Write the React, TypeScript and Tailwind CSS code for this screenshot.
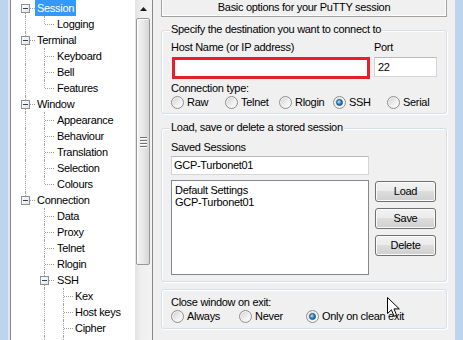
import React from "react";

const font =
  "font-['Liberation_Sans',Arial,sans-serif] text-[11px] leading-[13px] tracking-[-0.3px] text-black";

type Kind = "full" | "top" | "bottom";
type TreeRow = { label: string; lvl: 0 | 1 | 2; box?: boolean; sel?: boolean; segs: [number, Kind][] };

const V0 = 14;
const V1 = 33;
const V2 = 52;

const rows: TreeRow[] = [
  { label: "Session", lvl: 0, box: true, sel: true, segs: [[V0, "bottom"]] },
  { label: "Logging", lvl: 1, segs: [[V0, "full"], [V1, "top"]] },
  { label: "Terminal", lvl: 0, box: true, segs: [[V0, "full"]] },
  { label: "Keyboard", lvl: 1, segs: [[V0, "full"], [V1, "full"]] },
  { label: "Bell", lvl: 1, segs: [[V0, "full"], [V1, "full"]] },
  { label: "Features", lvl: 1, segs: [[V0, "full"], [V1, "top"]] },
  { label: "Window", lvl: 0, box: true, segs: [[V0, "full"]] },
  { label: "Appearance", lvl: 1, segs: [[V0, "full"], [V1, "full"]] },
  { label: "Behaviour", lvl: 1, segs: [[V0, "full"], [V1, "full"]] },
  { label: "Translation", lvl: 1, segs: [[V0, "full"], [V1, "full"]] },
  { label: "Selection", lvl: 1, segs: [[V0, "full"], [V1, "full"]] },
  { label: "Colours", lvl: 1, segs: [[V0, "full"], [V1, "top"]] },
  { label: "Connection", lvl: 0, box: true, segs: [[V0, "top"]] },
  { label: "Data", lvl: 1, segs: [[V1, "full"]] },
  { label: "Proxy", lvl: 1, segs: [[V1, "full"]] },
  { label: "Telnet", lvl: 1, segs: [[V1, "full"]] },
  { label: "Rlogin", lvl: 1, segs: [[V1, "full"]] },
  { label: "SSH", lvl: 1, box: true, segs: [[V1, "full"]] },
  { label: "Kex", lvl: 2, segs: [[V1, "full"], [V2, "full"]] },
  { label: "Host keys", lvl: 2, segs: [[V1, "full"], [V2, "full"]] },
  { label: "Cipher", lvl: 2, segs: [[V1, "full"], [V2, "full"]] },
  { label: "Auth", lvl: 2, segs: [[V1, "full"], [V2, "full"]] },
];

// text x, box x, connector x (box / leaf), connector width
const lvlPad = ["pl-[26px]", "pl-[46px]", "pl-[64px]"];
const boxLeft = ["left-[10px]", "left-[29px]", "left-[48px]"];
const connBox = ["left-[19px] w-[5px]", "left-[38px] w-[5px]", "left-[57px] w-[5px]"];
const connLeaf = ["left-[15px] w-[9px]", "left-[34px] w-[9px]", "left-[53px] w-[9px]"];

function Seg({ x, kind }: { x: number; kind: Kind }) {
  const pos = kind === "full" ? "top-0 h-[16px]" : kind === "top" ? "top-0 h-[8px]" : "top-[8px] h-[8px]";
  return (
    <span
      className={`absolute ${pos} border-l border-dotted border-[#a0a0a0]`}
      style={{ left: x }}
    />
  );
}

function Tree() {
  return (
    <div className="w-[124px] h-full overflow-hidden bg-white">
      {rows.map((r) => (
        <div key={r.label} className={`relative h-[16px] flex items-center whitespace-nowrap ${lvlPad[r.lvl]}`}>
          {r.segs.map(([x, k], i) => (
            <Seg key={i} x={x} kind={k} />
          ))}
          <span
            className={`absolute top-[8px] h-0 border-t border-dotted border-[#a0a0a0] ${
              r.box ? connBox[r.lvl] : connLeaf[r.lvl]
            }`}
          />
          {r.box && (
            <span
              className={`absolute top-[4px] ${boxLeft[r.lvl]} flex w-[9px] h-[9px] items-center justify-center border border-[#919191] bg-[linear-gradient(135deg,#ffffff,#e4e4e4)]`}
            >
              <span className="w-[5px] h-px bg-[#24446f]" />
            </span>
          )}
          {r.sel ? (
            <span className="-ml-[2px] px-[2px] h-[16px] flex items-center bg-[#3399ff] text-white">{r.label}</span>
          ) : (
            <span>{r.label}</span>
          )}
        </div>
      ))}
    </div>
  );
}

function Scrollbar() {
  return (
    <div className="w-[17px] h-full flex flex-col bg-[linear-gradient(to_right,#e2e2e2,#efefef_35%,#f3f3f3)]">
      <div className="h-[17px] flex items-center justify-center pl-[-1px]">
        <svg width="7" height="4" viewBox="0 0 7 4">
          <polygon points="3.5,0 7,4 0,4" fill="#1a1a1a" />
        </svg>
      </div>
      <div className="ml-[1px] mt-[1px] w-[14px] h-[247px] rounded-[2px] border border-[#979797] bg-[linear-gradient(to_right,#f4f4f4,#e8e8e8_50%,#d6d6d6)] shadow-[inset_1px_1px_0_#fff] flex flex-col items-center justify-center gap-[1px]">
        <span className="w-[7px] h-px bg-[#707070] shadow-[0_1px_0_#fff]" />
        <span className="w-[7px] h-px bg-[#707070] shadow-[0_1px_0_#fff] mt-[1px]" />
        <span className="w-[7px] h-px bg-[#707070] shadow-[0_1px_0_#fff] mt-[1px]" />
        <span className="w-[7px] h-px bg-[#707070] shadow-[0_1px_0_#fff] mt-[1px]" />
      </div>
    </div>
  );
}

function Group({ legend, className, children }: { legend?: string; className: string; children: React.ReactNode }) {
  return (
    <div
      className={`relative rounded-[3px] border border-[#d5dfe5] shadow-[inset_1px_1px_0_#fff,1px_1px_0_#fff] pl-[9px] ${className}`}
    >
      {legend && <span className="absolute left-[8px] -top-[8px] bg-[#f0f0f0] px-[1px] whitespace-nowrap">{legend}</span>}
      {children}
    </div>
  );
}

function Radio({ label, checked, w }: { label: string; checked?: boolean; w: string }) {
  return (
    <div className={`flex h-[13px] items-center ${w}`}>
      <span className="flex w-[13px] h-[13px] shrink-0 items-center justify-center rounded-full border border-[#8e8f8f] bg-[linear-gradient(135deg,#cfcfcf,#eeeeee_55%,#ffffff)] shadow-[inset_0_0_0_1px_#f4f4f4]">
        {checked && (
          <span className="w-[7px] h-[7px] rounded-full border border-[#1b4a78] bg-[radial-gradient(circle_at_35%_35%,#b4e6ff,#2b8bd6_50%,#0d4a88)]" />
        )}
      </span>
      <span className="ml-[3px] whitespace-nowrap">{label}</span>
    </div>
  );
}

function Btn({ children }: { children: React.ReactNode }) {
  return (
    <div className="w-[61px] h-[21px] flex items-center justify-center rounded-[3px] border border-[#707070] bg-[linear-gradient(#f2f2f2_0%,#ebebeb_49%,#dddddd_50%,#cfcfcf_100%)] shadow-[inset_0_0_0_1px_#fbfbfb]">
      {children}
    </div>
  );
}

export default function App() {
  return (
    <div className={`relative w-[463px] h-[340px] overflow-hidden bg-[#f0f0f0] flex ${font}`}>
      <div className="w-[8px] shrink-0 bg-[#bcd4ec]" />
      <div className="w-[2px] shrink-0 bg-[#dde7f1]" />
      <div className="shrink-0 flex h-[340px] border-x border-[#828790] bg-white">
        <Tree />
        <Scrollbar />
      </div>
      <div className="w-[8px] shrink-0" />

      <div className="w-[286px] shrink-0 flex flex-col">
        <div className="h-[17px] pt-[1px] text-center border-x border-b border-[#a0a0a0] shadow-[inset_1px_0_0_#fff,inset_-1px_-1px_0_#fff]">
          Basic options for your PuTTY session
        </div>

        <Group className="mt-[13px] pt-[10px] pb-[4px]" legend="Specify the destination you want to connect to">
          <div className="flex">
            <div className="w-[200px]">
              <div>Host Name (or IP address)</div>
              <div className="mt-[3px] ml-[1px] w-[198px] h-[22px] border-[3px] border-[#e3202b] bg-white" />
            </div>
            <div className="ml-[3px]">
              <div>Port</div>
              <div className="mt-[3px] w-[63px] h-[20px] border border-[#d3d5da] border-t-[#b9bbc1] bg-white pl-[3px] pt-[3px]">
                22
              </div>
            </div>
          </div>
          <div className="mt-[3px]">Connection type:</div>
          <div className="mt-[1px] flex">
            <Radio label="Raw" w="w-[54px]" />
            <Radio label="Telnet" w="w-[54px]" />
            <Radio label="Rlogin" w="w-[54px]" />
            <Radio label="SSH" w="w-[54px]" checked />
            <Radio label="Serial" w="w-[54px]" />
          </div>
        </Group>

        <Group className="mt-[14px] pt-[12px] pb-[6px]" legend="Load, save or delete a stored session">
          <div>Saved Sessions</div>
          <div className="mt-[2px] w-[198px] h-[19px] border border-[#d3d5da] border-t-[#b9bbc1] bg-white pl-[2px] pt-[2px]">
            GCP-Turbonet01
          </div>
          <div className="mt-[5px] flex">
            <div className="w-[198px] h-[95px] border border-[#828790] bg-white pl-[3px] pt-[3px] leading-[12px]">
              <div>Default Settings</div>
              <div>GCP-Turbonet01</div>
            </div>
            <div className="ml-[6px] mt-[1px] flex flex-col gap-[6px]">
              <Btn>Load</Btn>
              <Btn>Save</Btn>
              <Btn>Delete</Btn>
            </div>
          </div>
        </Group>

        <Group className="mt-[7px] pt-[6px] pb-[5px]">
          <div>Close window on exit:</div>
          <div className="mt-[1px] flex">
            <Radio label="Always" w="w-[68px]" />
            <Radio label="Never" w="w-[67px]" />
            <Radio label="Only on clean exit" w="w-[130px]" checked />
          </div>
        </Group>
      </div>

      <div className="w-[8px] shrink-0" />
      <div className="w-[8px] shrink-0 bg-[#bcd4ec]" />

      <svg className="absolute left-[387px] top-[297px]" width="13" height="20" viewBox="0 0 13 20">
        <path d="M0.5 0.5V16.5L4.4 12.8L7.1 19.2L9.6 18.2L7 11.9H12.3Z" fill="#fff" stroke="#000" strokeLinejoin="round" />
      </svg>
    </div>
  );
}
